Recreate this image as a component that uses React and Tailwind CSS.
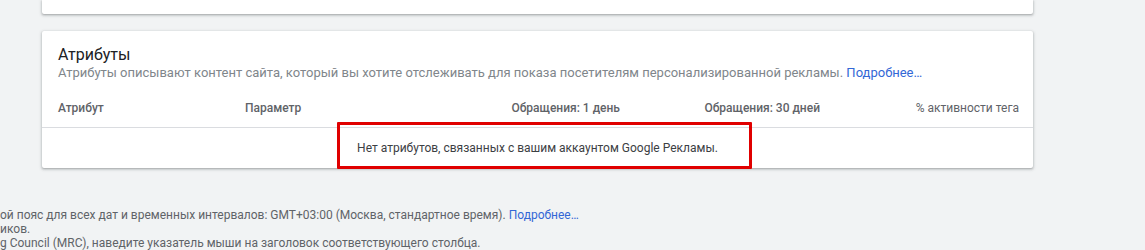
export default function App() {
  const font = { fontFamily: 'Roboto, "Noto Sans", sans-serif' };
  return (
    <div className="w-[1145px] h-[250px] bg-[#f1f3f4] overflow-hidden" style={font}>
      <div className="ml-[42px] w-[991px]">
        <div className="h-[14px] bg-white rounded-b-[2px] shadow-[0_1px_2px_rgba(60,64,67,0.3),0_1px_3px_1px_rgba(60,64,67,0.15)]" />
        <div className="relative mt-[17px] bg-white rounded-[2px] shadow-[0_1px_2px_rgba(60,64,67,0.3),0_1px_3px_1px_rgba(60,64,67,0.15)]">
          <div className="px-4 pt-[14px]">
            <div className="text-[16px] leading-[20px] text-[#202124]">Атрибуты</div>
            <div className="text-[13px] leading-[16px] text-[#80868b]">
              Атрибуты описывают контент сайта, который вы хотите отслеживать для показа посетителям персонализированной рекламы.{' '}
              <span className="text-[#3367d6]">Подробнее…</span>
            </div>
          </div>
          <div className="mt-[7px] h-[40px] pl-4 flex items-center text-[12px] font-medium text-[#5f6368] border-b border-[#dadce0]">
            <span className="w-[187px] shrink-0">Атрибут</span>
            <span className="w-[175px] shrink-0">Параметр</span>
            <span className="w-[200px] shrink-0 text-right">Обращения: 1 день</span>
            <span className="w-[200px] shrink-0 text-right">Обращения: 30 дней</span>
            <span className="w-[199px] shrink-0 text-right font-normal text-[#5f6368]">% активности тега</span>
          </div>
          <div className="h-[40px] flex items-center justify-center text-[12px] text-[#3c4043]">
            Нет атрибутов, связанных с вашим аккаунтом Google Рекламы.
          </div>
          <div className="absolute left-[295px] top-[91px] w-[415px] h-[47px] border-[3px] border-[#e00000] rounded-[1px]" />
        </div>
      </div>
      <div className="mt-[40px] text-[12px] leading-[14px] text-[#5f6368]">
        <div>
          ой пояс для всех дат и временных интервалов: GMT+03:00 (Москва, стандартное время).{' '}
          <span className="text-[#3367d6]">Подробнее…</span>
        </div>
        <div>иков.</div>
        <div>g Council (MRC), наведите указатель мыши на заголовок соответствующего столбца.</div>
      </div>
    </div>
  );
}
